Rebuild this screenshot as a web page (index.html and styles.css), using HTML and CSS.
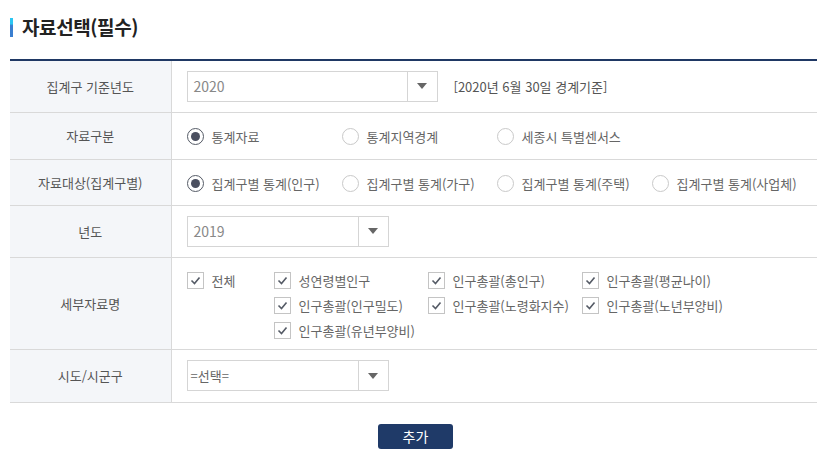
FILE: index.html
```html
<!DOCTYPE html>
<html lang="ko">
<head>
<meta charset="utf-8">
<link rel="stylesheet" href="styles.css">
</head>
<body>
<div class="wrap">
  <h2 class="title"><span class="bar"></span><span class="title-text">자료선택(필수)</span></h2>
  <table class="form">
    <tbody>
      <tr class="r1">
        <th>집계구 기준년도</th>
        <td>
          <div class="inline">
            <div class="select w251"><span class="val">2020</span><span class="arrow"><i></i></span></div>
            <span class="note">[2020년 6월 30일 경계기준]</span>
          </div>
        </td>
      </tr>
      <tr class="r2">
        <th>자료구분</th>
        <td>
          <div class="opts">
            <label class="opt"><span class="radio on"></span>통계자료</label>
            <label class="opt"><span class="radio"></span>통계지역경계</label>
            <label class="opt"><span class="radio"></span>세종시 특별센서스</label>
          </div>
        </td>
      </tr>
      <tr class="r3">
        <th>자료대상(집계구별)</th>
        <td>
          <div class="opts">
            <label class="opt"><span class="radio on"></span>집계구별 통계(인구)</label>
            <label class="opt"><span class="radio"></span>집계구별 통계(가구)</label>
            <label class="opt"><span class="radio"></span>집계구별 통계(주택)</label>
            <label class="opt"><span class="radio"></span>집계구별 통계(사업체)</label>
          </div>
        </td>
      </tr>
      <tr class="r4">
        <th>년도</th>
        <td>
          <div class="select w202"><span class="val">2019</span><span class="arrow"><i></i></span></div>
        </td>
      </tr>
      <tr class="r5">
        <th>세부자료명</th>
        <td class="checks-cell">
          <div class="checks">
            <div class="chk-all">
              <label class="chk"><span class="box"><svg viewBox="0 0 17 17" width="17" height="17"><path d="M4.5 8.5 L7.5 11.5 L12.5 5.5" fill="none" stroke="#555b66" stroke-width="1.6"/></svg></span>전체</label>
            </div>
            <div class="chk-list">
              <label class="chk"><span class="box"><svg viewBox="0 0 17 17" width="17" height="17"><path d="M4.5 8.5 L7.5 11.5 L12.5 5.5" fill="none" stroke="#555b66" stroke-width="1.6"/></svg></span>성연령별인구</label>
              <label class="chk"><span class="box"><svg viewBox="0 0 17 17" width="17" height="17"><path d="M4.5 8.5 L7.5 11.5 L12.5 5.5" fill="none" stroke="#555b66" stroke-width="1.6"/></svg></span>인구총괄(총인구)</label>
              <label class="chk"><span class="box"><svg viewBox="0 0 17 17" width="17" height="17"><path d="M4.5 8.5 L7.5 11.5 L12.5 5.5" fill="none" stroke="#555b66" stroke-width="1.6"/></svg></span>인구총괄(평균나이)</label>
              <label class="chk"><span class="box"><svg viewBox="0 0 17 17" width="17" height="17"><path d="M4.5 8.5 L7.5 11.5 L12.5 5.5" fill="none" stroke="#555b66" stroke-width="1.6"/></svg></span>인구총괄(인구밀도)</label>
              <label class="chk"><span class="box"><svg viewBox="0 0 17 17" width="17" height="17"><path d="M4.5 8.5 L7.5 11.5 L12.5 5.5" fill="none" stroke="#555b66" stroke-width="1.6"/></svg></span>인구총괄(노령화지수)</label>
              <label class="chk"><span class="box"><svg viewBox="0 0 17 17" width="17" height="17"><path d="M4.5 8.5 L7.5 11.5 L12.5 5.5" fill="none" stroke="#555b66" stroke-width="1.6"/></svg></span>인구총괄(노년부양비)</label>
              <label class="chk"><span class="box"><svg viewBox="0 0 17 17" width="17" height="17"><path d="M4.5 8.5 L7.5 11.5 L12.5 5.5" fill="none" stroke="#555b66" stroke-width="1.6"/></svg></span>인구총괄(유년부양비)</label>
            </div>
          </div>
        </td>
      </tr>
      <tr class="r6">
        <th>시도/시군구</th>
        <td>
          <div class="select w202"><span class="val dark">=선택=</span><span class="arrow"><i></i></span></div>
        </td>
      </tr>
    </tbody>
  </table>
  <div class="actions"><button class="btn" type="button">추가</button></div>
</div>
</body>
</html>
```

FILE: styles.css
```css
* { box-sizing: border-box; }
html, body { margin: 0; padding: 0; background: #fff; }
body {
  font-family: "Noto Sans CJK KR", "Noto Sans", sans-serif;
  color: #666;
  font-size: 13px;
}
.wrap { padding: 0 21px 0 10px; }

.title {
  display: flex;
  align-items: center;
  margin: 0;
  padding-top: 17px;
  height: 37px;
  margin-bottom: 22px;
}
.bar {
  display: block;
  width: 3px;
  height: 19px;
  background: linear-gradient(#2cc6f2 0%, #2cc6f2 30%, #3a7fd0 40%, #3a7fd0 100%);
}
.title-text {
  margin-left: 9px;
  font-size: 19px;
  font-weight: 700;
  color: #222;
  line-height: 20px;
  letter-spacing: -0.4px;
}

.form {
  width: 100%;
  border-collapse: collapse;
  border-top: 2px solid #1f3864;
}
.form th {
  width: 161px;
  background: #f4f6f9;
  border-right: 1px solid #d9d9d9;
  border-bottom: 1px solid #d9d9d9;
  font-weight: 400;
  color: #555;
  font-size: 13px;
  text-align: center;
  padding: 0;
}
.form td {
  border-bottom: 1px solid #d9d9d9;
  padding: 0 0 0 15px;
  vertical-align: middle;
}
.r1 th, .r1 td { height: 52px; }
.r2 th, .r2 td { height: 47px; padding-top: 2px; }
.r2 th { padding-top: 0; }
.r3 th, .r3 td { height: 46px; padding-top: 2px; }
.r3 th { padding-top: 0; }
.r4 th, .r4 td { height: 52px; }
.r5 th, .r5 td { height: 92px; }
.r6 th, .r6 td { height: 53px; }

.inline { display: flex; align-items: center; }

.select {
  display: flex;
  height: 31px;
  border: 1px solid #d5d5d5;
  background: #fff;
}
.w251 { width: 251px; }
.w202 { width: 202px; }
.select .val {
  flex: 1;
  padding-left: 6px;
  font-size: 14px;
  line-height: 29px;
  color: #888;
}
.select .val.dark { color: #666; font-size: 13px; padding-left: 3px; }
.select .arrow {
  width: 30px;
  border-left: 1px solid #d5d5d5;
  display: flex;
  align-items: center;
  justify-content: center;
}
.select .arrow i {
  display: block;
  width: 0;
  height: 0;
  border-left: 5px solid transparent;
  border-right: 5px solid transparent;
  border-top: 6px solid #666;
}
.note { margin-left: 16px; color: #555; font-size: 13px; }

.opts { display: flex; align-items: center; }
.opt {
  width: 155px;
  display: flex;
  align-items: center;
  color: #666;
  font-size: 13px;
  white-space: nowrap;
}
.radio {
  width: 17px;
  height: 17px;
  border-radius: 50%;
  border: 1px solid #c9c9c9;
  margin-right: 8px;
  flex: none;
  display: flex;
  align-items: center;
  justify-content: center;
  background: #fff;
}
.radio.on { border: 1.5px solid #555b66; }
.radio.on::after {
  content: "";
  width: 9px;
  height: 9px;
  border-radius: 50%;
  background: #4b5060;
}

.checks-cell { vertical-align: top !important; padding-top: 14px !important; }
.checks { display: flex; align-items: flex-start; }
.chk-all { width: 87px; }
.chk-list {
  display: flex;
  flex-wrap: wrap;
  width: 465px;
  row-gap: 8px;
}
.chk-list .chk { width: 154px; }
.chk {
  display: flex;
  align-items: center;
  height: 17px;
  color: #666;
  font-size: 13px;
  white-space: nowrap;
}
.box {
  width: 17px;
  height: 17px;
  border: 1px solid #c4c4c4;
  margin-right: 8px;
  flex: none;
  position: relative;
  background: #fff;
}
.box svg { position: absolute; left: -1px; top: -1px; }

.actions { display: flex; justify-content: center; padding-top: 21px; padding-left: 4px; }
.btn {
  width: 75px;
  height: 25px;
  border: 0;
  border-radius: 3px;
  background: #1f3a68;
  color: #fff;
  font-family: "Noto Sans CJK KR", sans-serif;
  font-size: 14px;
  padding: 0;
  line-height: 25px;
}
```
